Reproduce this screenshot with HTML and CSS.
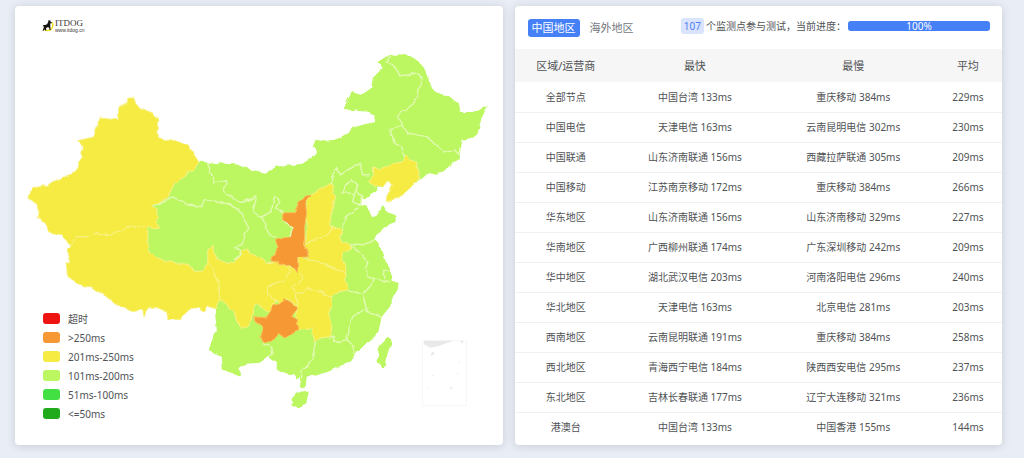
FILE: index.html
```html
<!DOCTYPE html>
<html lang="zh-CN">
<head>
<meta charset="utf-8">
<title>ITDOG</title>
<link rel="stylesheet" href="styles.css">
</head>
<body>
<main class="board">
  <section class="card map-card">
    <a class="brand" href="#">
      <svg class="brand-icon" viewBox="0 0 14 14" aria-hidden="true">
        <path d="M10.4 2.6A5.6 5.6 0 1 1 1.6 9.8" fill="none" stroke="#f2df25" stroke-width="1.6"/>
        <path d="M7.2 0.3 8 1.4 8.8 0.4 9 2.2 10.6 3 10.4 3.8 8.9 4.2 8.9 7.2 9.4 11.4 8.2 11.4 7.6 8.6 6 8.4 4.4 9.2 4.6 11.8 3.2 11.8 2.8 10.2 1.8 12.2 0.6 12.2 2 8.6 1.6 6.8 0.6 7.8 1.4 5.9 3.4 5.9 5.4 5 6.6 3Z" fill="#161410"/>
      </svg>
      <span class="brand-text"><span class="brand-name">ITDOG</span><span class="brand-url">www.itdog.cn</span></span>
    </a>
    <svg class="map" viewBox="15 6 488 439" role="img" aria-label="中国地图">
      <defs>
        <filter id="coast" x="0" y="0" width="100%" height="100%" color-interpolation-filters="sRGB">
          <feTurbulence type="fractalNoise" baseFrequency="0.16" numOctaves="1" seed="4"/>
          <feDisplacementMap in="SourceGraphic" scale="5" xChannelSelector="R" yChannelSelector="G"/>
        </filter>
      </defs>
      <g filter="url(#coast)">
        <g class="fast">
          <path d="M199 162 240 165 252 170 265 173 277 167 303 164 317 153 313 147 316 140 327 142 335 141 350 132 355 127 366 124 376 122 374 116 370 112 360 111 344 109 347 102 352 92 362 95 373 87 374 77 383 68 378 61 385 57 395 55 405 54 413 57 420 62 426 70 429 80 433 90 440 94 448 95 458 103 460 112 473 112 489 106 482 118 480 126 478 135 473 138 463 140 461 150 460 160 452 163 447 170 437 175 428 173 420 180 408 190 400 198 386 202 388 195 393 185 389 181 382 186 376 190 370 197 362 199 360 205 369 208 372 217 377 217 382 207 385 207 388 213 397 216 397 221 385 227 375 239 381 248 384 258 391 269 392 281 399 283 398 290 392 300 392 305 382 317 380 327 375 337 364 345 355 355 350 362 333 370 320 375 307 377 306 387 301 388 300 377 297 379 295 375 287 374 277 370 277 362 268 357 260 363 245 364 240 368 240 377 235 375 223 370 222 357 214 354 209 349 212 341 217 330 215 310 205 290 190 280 140 256 150 206Z"/>
          <path d="M301 392 310 391 309 398 305 404 298 410 292 406 292 398Z"/>
          <path d="M388 337 392 340 391 348 388 355 386 361 384 369 378 361 379 350 383 342Z"/>
        </g>
        <g class="medium">
          <path d="M100 118 118 120 119 107 127 104 128 98 134 98 136 104 142 109 153 113 158 120 157 133 159 138 177 141 190 147 193 153 199 162 195 170 187 174 174 185 168 197 153 206 159 215 157 222 159 228 148 228 132 226 123 230 108 236 97 233 87 237 77 237 70 246 62 235 47 232 46 224 37 218 39 212 37 205 32 203 28 196 32 190 42 185 48 187 52 182 62 179 78 170 79 161 82 158 82 145 77 141 94 137Z"/>
          <path d="M148 228 132 226 123 230 108 236 97 233 87 237 77 237 70 246 67 250 71 263 66 263 68 277 77 283 85 287 91 287 108 298 120 307 133 312 143 310 144 317 148 307 157 308 167 312 168 320 180 320 186 313 197 307 205 312 208 306 215 309 220 300 219 283 213 268 208 263 203 271 195 272 190 265 170 262 155 257 148 250Z"/>
          <path d="M208 263 208 250 212 247 220 262 235 263 241 252 247 248 251 255 260 257 267 263 277 262 288 266 290 272 283 282 268 287 268 295 275 300 272 306 273 311 267 312 258 304 255 305 252 322 247 327 242 329 232 310 220 300 219 283 213 268Z"/>
          <path d="M288 266 290 272 283 282 268 287 268 295 275 300 281 303 287 299 297 307 297 295 292 287 302 281 301 275 297 271Z"/>
          <path d="M302 257 308 260 320 262 332 268 345 272 348 290 340 292 332 297 320 292 307 289 297 295 292 287 302 281 301 275 297 271 299 258Z"/>
          <path d="M297 295 307 289 320 292 332 297 333 307 329 313 332 327 331 337 321 338 315 342 312 328 297 330 297 318 297 307Z"/>
          <path d="M305 245 313 240 328 235 332 227 343 230 340 237 343 243 351 245 351 250 343 253 342 260 346 265 345 272 332 268 320 262 308 260 308 254Z"/>
          <path d="M310 196 320 190 332 183 335 187 332 193 336 197 333 205 330 225 332 229 328 235 313 240 305 245 308 227 306 217 307 205Z"/>
          <path d="M374 167 380 170 391 165 402 162 406 155 410 160 417 162 418 170 420 179 408 190 400 198 386 202 388 195 393 185 389 181 382 186 376 187 370 182 374 175Z"/>
        </g>
        <g class="slow">
          <path d="M302 198 311 195 306 203 307 213 305 227 305 245 309 257 298 258 298 272 292 267 282 264 271 261 272 256 277 255 277 240 290 237 293 227 283 221 283 213 294 213 297 207Z"/>
          <path d="M255 317 267 318 272 311 273 305 280 303 285 299 297 308 293 317 298 320 298 330 286 338 280 335 272 342 263 342 261 337 263 330 260 323 255 323Z"/>
        </g>
        <g class="borders">
          <path d="M208 163 211 173 215 183 227 181 223 191 232 197 240 203 257 197 253 212 262 217 272 212 273 202 275 197 279 200 277 209 283 213"/>
          <path d="M262 217 266 228 270 235 277 238M283 221 293 227 290 237"/>
          <path d="M153 206 173 197 187 205 202 207 205 200 220 202 233 206 242 213 248 228 245 237 242 245 235 247 242 253 235 260"/>
          <path d="M390 57 387 63 397 68 400 76 418 73 422 80 417 97 411 106 397 116 403 125 391 130 395 145 402 147 405 157"/>
          <path d="M403 125 408 133 428 137 436 145 445 153 455 150 460 155"/>
          <path d="M333 185 333 175 337 168 341 175 351 168 360 163 363 175 370 175"/>
          <path d="M343 193 346 186 352 180 358 185 355 194Z"/>
          <path d="M355 194 353 202 361 204 362 197 357 190"/>
          <path d="M360 208 352 212 345 218 343 230M351 244 365 245 375 239"/>
          <path d="M351 246 363 255 368 262 365 267 368 277 375 279 390 282M385 279 385 272 390 271"/>
          <path d="M375 279 370 287 363 295 352 291 348 290"/>
          <path d="M363 295 368 312 382 318M366 309 353 317 347 340 335 343 335 338 331 337"/>
          <path d="M347 340 353 345 355 355"/>
          <path d="M317 342 313 357 308 366 302 372 302 379"/>
          <path d="M263 343 272 348 273 355 268 357"/>
        </g>
      </g>
      <path d="M423 341h44v65h-44z" fill="none" stroke="#f7f7f7"/>
      <path d="M424 341h30l-17 6-6 1-6-3zM460 341l4 0-1 3zM432 353l3-1-1 3-3 1zM457 374l2-1-1 2zM450 389l3-3-1 4zM432 376l2-1-1 2zM427 388l2-1-1 2zM459 363l1-2v3z" fill="#e9e9e9"/>
    </svg>
    <ul class="legend">
      <li><i class="chip timeout"></i>超时</li>
      <li><i class="chip slow-chip"></i>&gt;250ms</li>
      <li><i class="chip medium-chip"></i>201ms-250ms</li>
      <li><i class="chip fast-chip"></i>101ms-200ms</li>
      <li><i class="chip faster-chip"></i>51ms-100ms</li>
      <li><i class="chip fastest-chip"></i>&lt;=50ms</li>
    </ul>
  </section>

  <section class="card">
    <header class="toolbar">
      <nav class="tabs">
        <button type="button" class="tab active">中国地区</button>
        <button type="button" class="tab">海外地区</button>
      </nav>
      <div class="status">
        <span class="count">107</span>
        <span>个监测点参与测试，当前进度：</span>
        <div class="progress" role="progressbar" aria-valuenow="100" aria-valuemin="0" aria-valuemax="100" aria-label="当前进度"><div class="progress-fill" style="width:100%">100%</div></div>
      </div>
    </header>
    <table class="results">
      <colgroup><col class="c-area"><col class="c-best"><col class="c-worst"><col class="c-avg"></colgroup>
      <thead><tr><th>区域/运营商</th><th>最快</th><th>最慢</th><th>平均</th></tr></thead>
      <tbody>
        <tr><td>全部节点</td><td>中国台湾 133ms</td><td>重庆移动 384ms</td><td>229ms</td></tr>
        <tr><td>中国电信</td><td>天津电信 163ms</td><td>云南昆明电信 302ms</td><td>230ms</td></tr>
        <tr><td>中国联通</td><td>山东济南联通 156ms</td><td>西藏拉萨联通 305ms</td><td>209ms</td></tr>
        <tr><td>中国移动</td><td>江苏南京移动 172ms</td><td>重庆移动 384ms</td><td>266ms</td></tr>
        <tr><td>华东地区</td><td>山东济南联通 156ms</td><td>山东济南移动 329ms</td><td>227ms</td></tr>
        <tr><td>华南地区</td><td>广西柳州联通 174ms</td><td>广东深圳移动 242ms</td><td>209ms</td></tr>
        <tr><td>华中地区</td><td>湖北武汉电信 203ms</td><td>河南洛阳电信 296ms</td><td>240ms</td></tr>
        <tr><td>华北地区</td><td>天津电信 163ms</td><td>北京电信 281ms</td><td>203ms</td></tr>
        <tr><td>西南地区</td><td>云南昆明联通 191ms</td><td>重庆移动 384ms</td><td>258ms</td></tr>
        <tr><td>西北地区</td><td>青海西宁电信 184ms</td><td>陕西西安电信 295ms</td><td>237ms</td></tr>
        <tr><td>东北地区</td><td>吉林长春联通 177ms</td><td>辽宁大连移动 321ms</td><td>236ms</td></tr>
        <tr><td>港澳台</td><td>中国台湾 133ms</td><td>中国香港 155ms</td><td>144ms</td></tr>
      </tbody>
    </table>
  </section>
</main>
</body>
</html>
```
FILE: styles.css
```css
* { box-sizing: border-box; }

body {
  margin: 0;
  background: #e9edf5;
  color: #505255;
  font: 10px/16px "Noto Sans", "Noto Sans CJK SC", sans-serif;
}

.board {
  display: grid;
  grid-template-columns: 1fr 1fr;
  gap: 12px;
  padding: 6px 22px 13px 15px;
}

.card {
  background: #fff;
  border-radius: 4px;
  box-shadow: 0 1px 8px rgba(60, 75, 90, 0.2);
  overflow: hidden;
  min-width: 0;
}

.map-card { position: relative; }

.map { display: block; width: 100%; }

.fast path { fill: #bcf660; }
.medium path { fill: #f5eb42; stroke: #f8f28a; stroke-width: 1; }
.slow path { fill: #f69833; stroke: #f9c45a; stroke-width: 1; }
.borders path { fill: none; stroke: #e0fab0; stroke-width: 1.5; }

.brand {
  position: absolute;
  top: 13px;
  left: 27px;
  display: flex;
  color: #3c3634;
  text-decoration: none;
}

.brand-icon { width: 13px; height: 14px; }

.brand-text {
  display: flex;
  flex-direction: column;
  font-family: "Liberation Serif", serif;
}

.brand-name { font-size: 9px; line-height: 9px; }
.brand-url { font-size: 5px; line-height: 5px; font-family: "Liberation Sans", sans-serif; }

.legend {
  position: absolute;
  left: 28px;
  bottom: 23px;
  display: grid;
  gap: 3px;
  margin: 0;
  padding: 0;
  list-style: none;
}

.legend li { display: flex; align-items: center; gap: 8px; }

.chip { width: 17px; height: 11px; border-radius: 3px; }
.timeout { background: #ee1411; }
.slow-chip { background: #f69833; }
.medium-chip { background: #f5eb42; }
.fast-chip { background: #bcf660; }
.faster-chip { background: #42e042; }
.fastest-chip { background: #20aa1c; }

.toolbar {
  display: flex;
  align-items: center;
  justify-content: space-between;
  height: 43px;
  padding: 0 12px 0 13px;
}

.tabs { display: flex; gap: 6px; }

.tab {
  height: 18px;
  padding: 0 4px;
  border: 0;
  border-radius: 3px;
  background: none;
  color: #74787e;
  font: 11px/18px "Noto Sans", "Noto Sans CJK SC", sans-serif;
}

.tab.active { background: #4680f7; color: #fff; }

.status {
  display: flex;
  align-items: center;
  gap: 2px;
  padding-bottom: 4px;
  white-space: nowrap;
}

.count {
  padding: 0 3px;
  border-radius: 3px;
  background: #dae4fd;
  color: #4f7ef0;
}

.progress {
  width: 142px;
  height: 10px;
  border-radius: 3px;
  background: #e9ecef;
}

.progress-fill {
  height: 100%;
  border-radius: 3px;
  background: #4680f7;
  color: #fff;
  line-height: 10px;
  text-align: center;
}

.results {
  width: 100%;
  table-layout: fixed;
  border-collapse: collapse;
  text-align: center;
}

.c-area { width: 21%; }
.c-best { width: 32%; }
.c-worst { width: 33%; }
.c-avg { width: 14%; }

.results th {
  height: 33px;
  padding: 0;
  background: #f6f6f6;
  font-size: 11px;
  font-weight: 400;
}

.results td {
  height: 30px;
  padding: 0;
  border-bottom: 1px solid #f0f0f0;
}

.results tr:last-child td { border-bottom: 0; }
```
